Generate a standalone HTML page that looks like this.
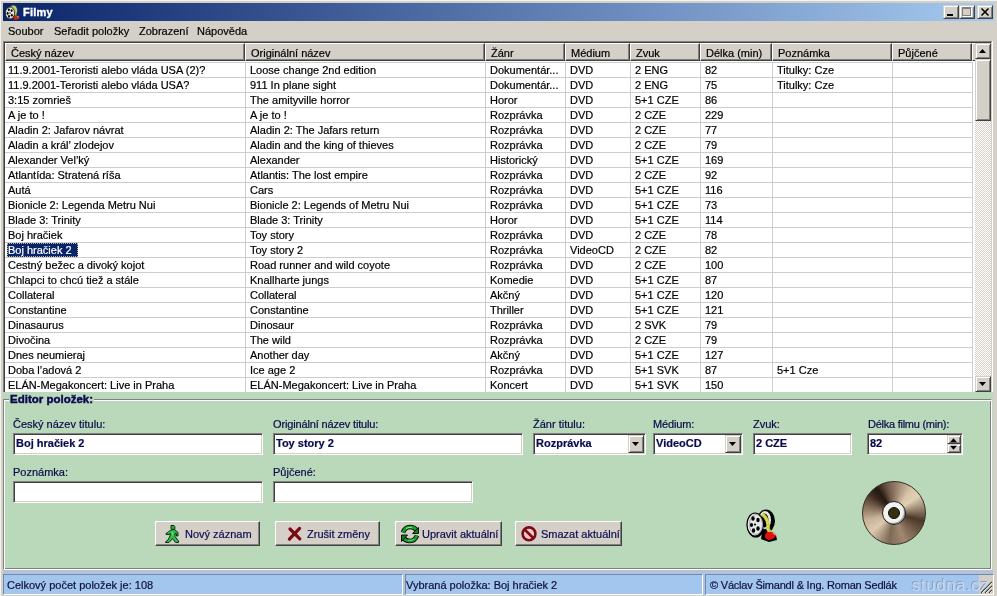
<!DOCTYPE html>
<html><head><meta charset="utf-8">
<style>
*{box-sizing:border-box}
html,body{margin:0;padding:0}
body{width:997px;height:596px;overflow:hidden;position:relative;background:#d4d0c8;font-family:"Liberation Sans",sans-serif;font-size:11px;color:#000}
.a{position:absolute}
.t{position:absolute;white-space:pre;line-height:13px;will-change:transform;-webkit-text-stroke:0.2px currentColor}
.hdr{position:absolute;top:43px;height:18px;background:#d4d0c8;border-top:1px solid #fff;border-left:1px solid #fff;border-right:1px solid #404040;border-bottom:1px solid #404040;box-shadow:inset -1px -1px 0 #808080}
.vg{position:absolute;top:62px;width:1px;height:330px;background:#cdcdcd}
.hg{position:absolute;left:5px;width:968px;height:1px;background:#cdcdcd}
.tb{position:absolute;height:22px;background:#fff;border-top:1px solid #808080;border-left:1px solid #808080;border-right:1px solid #fff;border-bottom:1px solid #fff;box-shadow:inset 1px 1px 0 #404040, inset -1px -1px 0 #d4d0c8}
.lbl{will-change:transform;position:absolute;white-space:pre;color:#080a48;line-height:13px;-webkit-text-stroke:0.2px currentColor}
.bt{position:absolute;top:521px;height:25px;background:#d4d0c8;border-top:1px solid #fff;border-left:1px solid #fff;border-right:1px solid #404040;border-bottom:1px solid #404040;box-shadow:inset -1px -1px 0 #808080}
.btx{will-change:transform;position:absolute;white-space:pre;color:#0c0c50;line-height:13px;top:6px;-webkit-text-stroke:0.2px currentColor}
.btn3d{position:absolute;background:#d4d0c8;border-top:1px solid #d4d0c8;border-left:1px solid #d4d0c8;border-right:1px solid #404040;border-bottom:1px solid #404040;box-shadow:inset 1px 1px 0 #fff, inset -1px -1px 0 #808080}
.bold{font-weight:bold;color:#0a0a50}
.sp{position:absolute;top:574px;height:21px;background:#a2c6ee;border-top:1px solid #6a8ab0;border-left:1px solid #6a8ab0;border-right:1px solid #fff;border-bottom:1px solid #fff}
</style></head><body>

<div class="a" style="left:0;top:0;width:997px;height:1px;background:#f4f4ee"></div>
<div class="a" style="left:0;top:0;width:1px;height:596px;background:#f4f4ee"></div>
<div class="a" style="left:3px;top:3px;width:991px;height:18px;background:linear-gradient(to right,#0a246a,#a6caf0)"></div>
<div class="t" style="left:23px;top:5px;color:#fff;font-weight:bold;font-size:11px;line-height:14px;letter-spacing:0.2px;-webkit-text-stroke:0.35px #fff">Filmy</div>
<svg class="a" style="left:2px;top:3px" width="18" height="18" viewBox="0 0 18 18"><ellipse cx="11.5" cy="7.5" rx="4" ry="5.5" fill="#c0c8b8" stroke="#203018" stroke-width="0.8"/><path d="M9.5 3.5 Q14 7 13 13" stroke="#a8c838" stroke-width="2.4" fill="none"/><path d="M12 12 Q16 12 17.5 14.5 Q16 17 13 17 Q11 16 12 12 Z" fill="#c82818"/><path d="M15 13 L17 14.5" stroke="#f0a080" stroke-width="1"/><ellipse cx="8" cy="10" rx="4.6" ry="6" fill="#e4e4e0" stroke="#202020" stroke-width="0.8"/><g fill="#000"><circle cx="8" cy="10" r="0.7"/><ellipse cx="6.8" cy="6.8" rx="1" ry="1.3"/><ellipse cx="9.6" cy="7.6" rx="1" ry="1.3"/><ellipse cx="5.6" cy="10.4" rx="1" ry="1.3"/><ellipse cx="7" cy="13.4" rx="1" ry="1.3"/><ellipse cx="9.8" cy="12.2" rx="1" ry="1.3"/></g></svg>
<div class="btn3d" style="left:943px;top:5px;width:16px;height:14px"></div>
<div class="btn3d" style="left:959px;top:5px;width:16px;height:14px"></div>
<div class="btn3d" style="left:977px;top:5px;width:16px;height:14px"></div>
<div class="a" style="left:947px;top:14px;width:6px;height:2px;background:#000"></div>
<div class="a" style="left:962px;top:7px;width:9px;height:9px;border:1px solid #808080;border-top-width:2px;box-shadow:1px 1px 0 #fff"></div>
<svg class="a" style="left:977px;top:5px" width="16" height="14" viewBox="0 0 16 14"><path d="M4.5 3.5 L11.5 10.5 M11.5 3.5 L4.5 10.5" stroke="#000" stroke-width="1.6"/></svg>
<div class="t" style="left:8px;top:25px">Soubor</div>
<div class="t" style="left:54px;top:25px">Seřadit položky</div>
<div class="t" style="left:139px;top:25px">Zobrazení</div>
<div class="t" style="left:197px;top:25px">Nápověda</div>
<div class="a" style="left:3px;top:41px;width:989px;height:1px;background:#808080"></div>
<div class="a" style="left:3px;top:41px;width:1px;height:351px;background:#808080"></div>
<div class="a" style="left:4px;top:42px;width:987px;height:1px;background:#404040"></div>
<div class="a" style="left:4px;top:42px;width:1px;height:350px;background:#404040"></div>
<div class="a" style="left:991px;top:42px;width:1px;height:350px;background:#d4d0c8"></div>
<div class="a" style="left:992px;top:41px;width:1px;height:351px;background:#fff"></div>
<div class="a" style="left:5px;top:43px;width:986px;height:349px;background:#fff"></div>
<div class="hdr" style="left:5px;width:240px"></div>
<div class="t" style="left:11px;top:47px">Český název</div>
<div class="hdr" style="left:245px;width:240px"></div>
<div class="t" style="left:251px;top:47px">Originální název</div>
<div class="hdr" style="left:485px;width:80px"></div>
<div class="t" style="left:491px;top:47px">Žánr</div>
<div class="hdr" style="left:565px;width:65px"></div>
<div class="t" style="left:571px;top:47px">Médium</div>
<div class="hdr" style="left:630px;width:70px"></div>
<div class="t" style="left:636px;top:47px">Zvuk</div>
<div class="hdr" style="left:700px;width:72px"></div>
<div class="t" style="left:706px;top:47px">Délka (min)</div>
<div class="hdr" style="left:772px;width:120px"></div>
<div class="t" style="left:778px;top:47px">Poznámka</div>
<div class="hdr" style="left:892px;width:80px"></div>
<div class="t" style="left:898px;top:47px">Půjčené</div>
<div class="hdr" style="left:972px;width:3px;border-right:0;box-shadow:none"></div>
<div class="hg" style="top:62px"></div>
<div class="hg" style="top:77px"></div>
<div class="hg" style="top:92px"></div>
<div class="hg" style="top:107px"></div>
<div class="hg" style="top:122px"></div>
<div class="hg" style="top:137px"></div>
<div class="hg" style="top:152px"></div>
<div class="hg" style="top:167px"></div>
<div class="hg" style="top:182px"></div>
<div class="hg" style="top:197px"></div>
<div class="hg" style="top:212px"></div>
<div class="hg" style="top:227px"></div>
<div class="hg" style="top:242px"></div>
<div class="hg" style="top:257px"></div>
<div class="hg" style="top:272px"></div>
<div class="hg" style="top:287px"></div>
<div class="hg" style="top:302px"></div>
<div class="hg" style="top:317px"></div>
<div class="hg" style="top:332px"></div>
<div class="hg" style="top:347px"></div>
<div class="hg" style="top:362px"></div>
<div class="hg" style="top:377px"></div>
<div class="vg" style="left:245px"></div>
<div class="vg" style="left:485px"></div>
<div class="vg" style="left:565px"></div>
<div class="vg" style="left:630px"></div>
<div class="vg" style="left:700px"></div>
<div class="vg" style="left:772px"></div>
<div class="vg" style="left:892px"></div>
<div class="vg" style="left:972px"></div>
<div class="t" style="left:8px;top:64px">11.9.2001-Teroristi alebo vláda USA (2)?</div>
<div class="t" style="left:250px;top:64px">Loose change 2nd edition</div>
<div class="t" style="left:490px;top:64px">Dokumentár...</div>
<div class="t" style="left:570px;top:64px">DVD</div>
<div class="t" style="left:635px;top:64px">2 ENG</div>
<div class="t" style="left:705px;top:64px">82</div>
<div class="t" style="left:777px;top:64px">Titulky: Cze</div>
<div class="t" style="left:8px;top:79px">11.9.2001-Teroristi alebo vláda USA?</div>
<div class="t" style="left:250px;top:79px">911 In plane sight</div>
<div class="t" style="left:490px;top:79px">Dokumentár...</div>
<div class="t" style="left:570px;top:79px">DVD</div>
<div class="t" style="left:635px;top:79px">2 ENG</div>
<div class="t" style="left:705px;top:79px">75</div>
<div class="t" style="left:777px;top:79px">Titulky: Cze</div>
<div class="t" style="left:8px;top:94px">3:15 zomrieš</div>
<div class="t" style="left:250px;top:94px">The amityville horror</div>
<div class="t" style="left:490px;top:94px">Horor</div>
<div class="t" style="left:570px;top:94px">DVD</div>
<div class="t" style="left:635px;top:94px">5+1 CZE</div>
<div class="t" style="left:705px;top:94px">86</div>
<div class="t" style="left:8px;top:109px">A je to !</div>
<div class="t" style="left:250px;top:109px">A je to !</div>
<div class="t" style="left:490px;top:109px">Rozprávka</div>
<div class="t" style="left:570px;top:109px">DVD</div>
<div class="t" style="left:635px;top:109px">2 CZE</div>
<div class="t" style="left:705px;top:109px">229</div>
<div class="t" style="left:8px;top:124px">Aladin 2: Jafarov návrat</div>
<div class="t" style="left:250px;top:124px">Aladin 2: The Jafars return</div>
<div class="t" style="left:490px;top:124px">Rozprávka</div>
<div class="t" style="left:570px;top:124px">DVD</div>
<div class="t" style="left:635px;top:124px">2 CZE</div>
<div class="t" style="left:705px;top:124px">77</div>
<div class="t" style="left:8px;top:139px">Aladin a král’ zlodejov</div>
<div class="t" style="left:250px;top:139px">Aladin and the king of thieves</div>
<div class="t" style="left:490px;top:139px">Rozprávka</div>
<div class="t" style="left:570px;top:139px">DVD</div>
<div class="t" style="left:635px;top:139px">2 CZE</div>
<div class="t" style="left:705px;top:139px">79</div>
<div class="t" style="left:8px;top:154px">Alexander Vel’ký</div>
<div class="t" style="left:250px;top:154px">Alexander</div>
<div class="t" style="left:490px;top:154px">Historický</div>
<div class="t" style="left:570px;top:154px">DVD</div>
<div class="t" style="left:635px;top:154px">5+1 CZE</div>
<div class="t" style="left:705px;top:154px">169</div>
<div class="t" style="left:8px;top:169px">Atlantída: Stratená ríša</div>
<div class="t" style="left:250px;top:169px">Atlantis: The lost empire</div>
<div class="t" style="left:490px;top:169px">Rozprávka</div>
<div class="t" style="left:570px;top:169px">DVD</div>
<div class="t" style="left:635px;top:169px">2 CZE</div>
<div class="t" style="left:705px;top:169px">92</div>
<div class="t" style="left:8px;top:184px">Autá</div>
<div class="t" style="left:250px;top:184px">Cars</div>
<div class="t" style="left:490px;top:184px">Rozprávka</div>
<div class="t" style="left:570px;top:184px">DVD</div>
<div class="t" style="left:635px;top:184px">5+1 CZE</div>
<div class="t" style="left:705px;top:184px">116</div>
<div class="t" style="left:8px;top:199px">Bionicle 2: Legenda Metru Nui</div>
<div class="t" style="left:250px;top:199px">Bionicle 2: Legends of Metru Nui</div>
<div class="t" style="left:490px;top:199px">Rozprávka</div>
<div class="t" style="left:570px;top:199px">DVD</div>
<div class="t" style="left:635px;top:199px">5+1 CZE</div>
<div class="t" style="left:705px;top:199px">73</div>
<div class="t" style="left:8px;top:214px">Blade 3: Trinity</div>
<div class="t" style="left:250px;top:214px">Blade 3: Trinity</div>
<div class="t" style="left:490px;top:214px">Horor</div>
<div class="t" style="left:570px;top:214px">DVD</div>
<div class="t" style="left:635px;top:214px">5+1 CZE</div>
<div class="t" style="left:705px;top:214px">114</div>
<div class="t" style="left:8px;top:229px">Boj hračiek</div>
<div class="t" style="left:250px;top:229px">Toy story</div>
<div class="t" style="left:490px;top:229px">Rozprávka</div>
<div class="t" style="left:570px;top:229px">DVD</div>
<div class="t" style="left:635px;top:229px">2 CZE</div>
<div class="t" style="left:705px;top:229px">78</div>
<div class="a" style="left:7px;top:243px;width:71px;height:14px;background:#0a246a;outline:1px dotted #b8b490;outline-offset:-1px"></div>
<div class="t" style="left:8px;top:244px;color:#fff">Boj hračiek 2</div>
<div class="t" style="left:250px;top:244px">Toy story 2</div>
<div class="t" style="left:490px;top:244px">Rozprávka</div>
<div class="t" style="left:570px;top:244px">VideoCD</div>
<div class="t" style="left:635px;top:244px">2 CZE</div>
<div class="t" style="left:705px;top:244px">82</div>
<div class="t" style="left:8px;top:259px">Cestný bežec a divoký kojot</div>
<div class="t" style="left:250px;top:259px">Road runner and wild coyote</div>
<div class="t" style="left:490px;top:259px">Rozprávka</div>
<div class="t" style="left:570px;top:259px">DVD</div>
<div class="t" style="left:635px;top:259px">2 CZE</div>
<div class="t" style="left:705px;top:259px">100</div>
<div class="t" style="left:8px;top:274px">Chlapci to chcú tiež a stále</div>
<div class="t" style="left:250px;top:274px">Knallharte jungs</div>
<div class="t" style="left:490px;top:274px">Komedie</div>
<div class="t" style="left:570px;top:274px">DVD</div>
<div class="t" style="left:635px;top:274px">5+1 CZE</div>
<div class="t" style="left:705px;top:274px">87</div>
<div class="t" style="left:8px;top:289px">Collateral</div>
<div class="t" style="left:250px;top:289px">Collateral</div>
<div class="t" style="left:490px;top:289px">Akčný</div>
<div class="t" style="left:570px;top:289px">DVD</div>
<div class="t" style="left:635px;top:289px">5+1 CZE</div>
<div class="t" style="left:705px;top:289px">120</div>
<div class="t" style="left:8px;top:304px">Constantine</div>
<div class="t" style="left:250px;top:304px">Constantine</div>
<div class="t" style="left:490px;top:304px">Thriller</div>
<div class="t" style="left:570px;top:304px">DVD</div>
<div class="t" style="left:635px;top:304px">5+1 CZE</div>
<div class="t" style="left:705px;top:304px">121</div>
<div class="t" style="left:8px;top:319px">Dinasaurus</div>
<div class="t" style="left:250px;top:319px">Dinosaur</div>
<div class="t" style="left:490px;top:319px">Rozprávka</div>
<div class="t" style="left:570px;top:319px">DVD</div>
<div class="t" style="left:635px;top:319px">2 SVK</div>
<div class="t" style="left:705px;top:319px">79</div>
<div class="t" style="left:8px;top:334px">Divočina</div>
<div class="t" style="left:250px;top:334px">The wild</div>
<div class="t" style="left:490px;top:334px">Rozprávka</div>
<div class="t" style="left:570px;top:334px">DVD</div>
<div class="t" style="left:635px;top:334px">2 CZE</div>
<div class="t" style="left:705px;top:334px">79</div>
<div class="t" style="left:8px;top:349px">Dnes neumieraj</div>
<div class="t" style="left:250px;top:349px">Another day</div>
<div class="t" style="left:490px;top:349px">Akčný</div>
<div class="t" style="left:570px;top:349px">DVD</div>
<div class="t" style="left:635px;top:349px">5+1 CZE</div>
<div class="t" style="left:705px;top:349px">127</div>
<div class="t" style="left:8px;top:364px">Doba l’adová 2</div>
<div class="t" style="left:250px;top:364px">Ice age 2</div>
<div class="t" style="left:490px;top:364px">Rozprávka</div>
<div class="t" style="left:570px;top:364px">DVD</div>
<div class="t" style="left:635px;top:364px">5+1 SVK</div>
<div class="t" style="left:705px;top:364px">87</div>
<div class="t" style="left:777px;top:364px">5+1 Cze</div>
<div class="t" style="left:8px;top:379px">ELÁN-Megakoncert: Live in Praha</div>
<div class="t" style="left:250px;top:379px">ELÁN-Megakoncert: Live in Praha</div>
<div class="t" style="left:490px;top:379px">Koncert</div>
<div class="t" style="left:570px;top:379px">DVD</div>
<div class="t" style="left:635px;top:379px">5+1 SVK</div>
<div class="t" style="left:705px;top:379px">150</div>
<div class="a" style="left:975px;top:43px;width:16px;height:349px;background-color:#fff;background-image:linear-gradient(45deg,#d4d0c8 25%,transparent 25%,transparent 75%,#d4d0c8 75%),linear-gradient(45deg,#d4d0c8 25%,transparent 25%,transparent 75%,#d4d0c8 75%);background-size:2px 2px;background-position:0 0,1px 1px"></div>
<div class="btn3d" style="left:975px;top:43px;width:16px;height:16px"></div>
<svg class="a" style="left:975px;top:43px" width="16" height="16"><path d="M4 10h7l-3.5-4z" fill="#000"/></svg>
<div class="btn3d" style="left:975px;top:59px;width:16px;height:62px"></div>
<div class="btn3d" style="left:975px;top:376px;width:16px;height:16px"></div>
<svg class="a" style="left:975px;top:376px" width="16" height="16"><path d="M4 6h7l-3.5 4z" fill="#000"/></svg>
<div class="a" style="left:3px;top:392px;width:990px;height:179px;background:#bad8ba"></div>
<div class="a" style="left:3px;top:399px;width:989px;height:171px;border-top:1px solid #808080;border-left:1px solid #808080;border-right:1px solid #fff;border-bottom:1px solid #fff;box-shadow:inset 1px 1px 0 #fff, inset -1px -1px 0 #808080"></div>
<div class="t bold" style="left:9px;top:393px;background:#bad8ba;padding:0 1px;font-size:11.5px;-webkit-text-stroke:0.45px currentColor">Editor položek:</div>
<div class="lbl" style="left:13px;top:418px;letter-spacing:0px">Český název titulu:</div>
<div class="lbl" style="left:273px;top:418px;letter-spacing:-0.15px">Originální název titulu:</div>
<div class="lbl" style="left:533px;top:418px;letter-spacing:0px">Žánr titulu:</div>
<div class="lbl" style="left:653px;top:418px;letter-spacing:-0.15px">Médium:</div>
<div class="lbl" style="left:753px;top:418px;letter-spacing:0px">Zvuk:</div>
<div class="lbl" style="left:868px;top:418px;letter-spacing:-0.25px">Délka filmu (min):</div>
<div class="lbl" style="left:13px;top:466px">Poznámka:</div>
<div class="lbl" style="left:273px;top:466px">Půjčené:</div>
<div class="tb" style="left:13px;top:433px;width:250px"></div>
<div class="t bold" style="left:16px;top:437px">Boj hračiek 2</div>
<div class="tb" style="left:273px;top:433px;width:250px"></div>
<div class="t bold" style="left:276px;top:437px">Toy story 2</div>
<div class="tb" style="left:533px;top:433px;width:113px"></div>
<div class="t bold" style="left:536px;top:437px">Rozprávka</div>
<div class="tb" style="left:653px;top:433px;width:90px"></div>
<div class="t bold" style="left:656px;top:437px">VideoCD</div>
<div class="tb" style="left:753px;top:433px;width:99px"></div>
<div class="t bold" style="left:756px;top:437px">2 CZE</div>
<div class="tb" style="left:867px;top:433px;width:96px"></div>
<div class="t bold" style="left:870px;top:437px">82</div>
<div class="tb" style="left:13px;top:481px;width:250px"></div>
<div class="tb" style="left:273px;top:481px;width:200px"></div>
<div class="btn3d" style="left:628px;top:435px;width:16px;height:18px"></div>
<svg class="a" style="left:628px;top:435px" width="16" height="18"><path d="M4 7h7l-3.5 4z" fill="#000"/></svg>
<div class="btn3d" style="left:725px;top:435px;width:16px;height:18px"></div>
<svg class="a" style="left:725px;top:435px" width="16" height="18"><path d="M4 7h7l-3.5 4z" fill="#000"/></svg>
<div class="btn3d" style="left:947px;top:435px;width:14px;height:9px"></div>
<div class="btn3d" style="left:947px;top:444px;width:14px;height:9px"></div>
<svg class="a" style="left:947px;top:435px" width="14" height="18"><path d="M3 7.2 L10 7.2 L6.5 3.2 Z M3 10.8 L10 10.8 L6.5 14.8 Z" fill="#000"/></svg>
<div class="bt" style="left:155px;width:105px"><div class="btx" style="left:29px">Nový záznam</div></div>
<div class="bt" style="left:275px;width:105px"><div class="btx" style="left:31px">Zrušit změny</div></div>
<div class="bt" style="left:395px;width:107px"><div class="btx" style="left:26px">Upravit aktuální</div></div>
<div class="bt" style="left:515px;width:107px"><div class="btx" style="left:25px">Smazat aktuální</div></div>
<svg class="a" style="left:160px;top:522px" width="24" height="24" viewBox="0 0 24 24"><path d="M11 3.5 L14 3.5 L14.8 4.5 L14.8 7.2 L12 7.5 L11 6.8 Z" fill="#28b040" stroke="#0a2a10" stroke-width="1"/><path d="M10.5 8 L14.5 7.5 L18 10.5 L18 14 L16.5 14 L16.3 11.5 L15.2 11.2 L15 14.5 L18.5 19 L18.5 20.5 L15.5 20.5 L12.5 16.5 L10 19.5 L9 20.5 L5.5 20.5 L5.5 19.8 L8 18 L10 14 L10.5 11.5 L9 12.5 L6 12.5 L6 11.5 L8.5 10 Z" fill="#30c048" stroke="#0a2a10" stroke-width="1" stroke-linejoin="round"/><path d="M12 9.5 L13 13.5" stroke="#70e080" stroke-width="1"/></svg><svg class="a" style="left:284px;top:522px" width="24" height="24" viewBox="0 0 24 24"><path d="M6 7 L15.8 16.8 M15.6 6.4 L5.4 17.2" stroke="#7c0a14" stroke-width="3.2" stroke-linecap="round"/></svg><svg class="a" style="left:398px;top:522px" width="24" height="24" viewBox="0 0 24 24"><path d="M5 10.5 Q7 5 12 5 Q17 5 18.5 8.5" stroke="#000" stroke-width="4.6" fill="none"/><path d="M5 10.5 Q7 5 12 5 Q17 5 18.5 8.5" stroke="#18a028" stroke-width="2.8" fill="none"/><path d="M14.5 11.5 L20.5 11.5 L20.5 5.5 Z" fill="#108018" stroke="#000" stroke-width="0.9"/><path d="M19 13.5 Q17 19 12 19 Q7 19 5.5 15.5" stroke="#000" stroke-width="4.6" fill="none"/><path d="M19 13.5 Q17 19 12 19 Q7 19 5.5 15.5" stroke="#18a028" stroke-width="2.8" fill="none"/><path d="M9.5 13 L3.5 13 L3.5 19.5 Z" fill="#108018" stroke="#000" stroke-width="0.9"/><path d="M8 6.5 Q11 4.8 14 5.5" stroke="#80f090" stroke-width="1" fill="none"/><path d="M10 18.2 Q13 19 16 17" stroke="#60e070" stroke-width="1" fill="none"/></svg><svg class="a" style="left:517px;top:522px" width="24" height="24" viewBox="0 0 24 24"><circle cx="12" cy="11.8" r="6.4" fill="#f4c8c8" stroke="#7c0a14" stroke-width="2.6"/><path d="M7.8 7.6 L16.2 16" stroke="#7c0a14" stroke-width="2.6"/></svg>
<svg class="a" style="left:743px;top:505px" width="40" height="40" viewBox="0 0 40 40"><g fill="#000"><ellipse cx="23" cy="16" rx="9" ry="11.5"/><ellipse cx="12.8" cy="20.3" rx="9" ry="12.3"/><path d="M20 22 L33 30 L34 35 L26 37 L18 34 Z"/></g><ellipse cx="22" cy="15" rx="6.5" ry="9.5" fill="#e8e8e8" stroke="#000" stroke-width="1"/><ellipse cx="21.5" cy="15.5" rx="4" ry="7" fill="#000"/><path d="M19 9 Q26 14 25 24 L28 29" stroke="#c8d040" stroke-width="3.5" fill="none"/><path d="M19.5 10 Q25.5 14.5 24.5 24 L27 28" stroke="#f4f480" stroke-width="1" stroke-dasharray="1.5 1.5" fill="none"/><path d="M24 27 Q30 26 33 30 Q32 34 26 35 Q21 34 22 30 Z" fill="#e01010"/><path d="M30 28 L33 30" stroke="#f0a060" stroke-width="1.5"/><ellipse cx="12" cy="19.5" rx="8" ry="11.5" fill="#e6e6e6" stroke="#000" stroke-width="1.2"/><ellipse cx="13" cy="19.5" rx="6.5" ry="10" fill="none" stroke="#a8a8a8" stroke-width="1"/><g fill="#000"><circle cx="12" cy="19.5" r="1.1"/><ellipse cx="10" cy="13.5" rx="1.7" ry="2.2"/><ellipse cx="15" cy="15" rx="1.7" ry="2.2"/><ellipse cx="8.5" cy="20" rx="1.6" ry="2.1"/><ellipse cx="10.5" cy="25.5" rx="1.7" ry="2.2"/><ellipse cx="15" cy="23.5" rx="1.7" ry="2.2"/></g></svg><div class="a" style="left:862px;top:481px;width:64px;height:64px;border-radius:50%;background:conic-gradient(from 0deg,#8c7462 0deg,#d8c4a8 35deg,#e0d0b4 55deg,#8a7664 85deg,#4a3828 105deg,#7a6450 135deg,#a08870 160deg,#7e6a56 190deg,#dccab0 230deg,#c8b498 255deg,#8e7660 280deg,#3a2a1e 310deg,#241810 325deg,#6a5644 345deg,#8c7462 360deg);border:1px solid #3a3020"></div><div class="a" style="left:882px;top:501px;width:24px;height:24px;border-radius:50%;background:#f2f2f0;border:1.5px solid #181818;box-shadow:inset -1px -1px 1px #909090"></div><div class="a" style="left:888px;top:507px;width:12px;height:12px;border-radius:50%;background:#38300c;border:1px solid #101010"></div>
<div class="a" style="left:3px;top:570px;width:990px;height:25px;background:#b4c2d8"></div>
<div class="sp" style="left:3px;width:400px"></div>
<div class="sp" style="left:405px;width:298px"></div>
<div class="sp" style="left:705px;width:289px"></div>
<div class="a" style="left:979px;top:575px;width:14px;height:19px;background:#d4d0c8"></div>
<div class="t" style="left:7px;top:579px;color:#10103a">Celkový počet položek je: 108</div>
<div class="t" style="left:406px;top:579px;color:#10103a">Vybraná položka: Boj hračiek 2</div>
<div class="t" style="left:710px;top:579px;letter-spacing:-0.2px;color:#10103a">© Václav Šimandl &amp; Ing. Roman Sedlák</div>
<div class="t" style="left:912px;top:577px;font-size:17px;line-height:18px;letter-spacing:0.5px;color:#c4d8f0;text-shadow:-1px -1px 0 #8aa0bc;-webkit-text-stroke:0">studna.cz</div>
<svg class="a" style="left:979px;top:580px" width="14" height="14"><path d="M13 2 L2 13 M13 6 L6 13 M13 10 L10 13" stroke="#404040" stroke-width="1.3"/><path d="M13 3 L3 13 M13 7 L7 13 M13 11 L11 13" stroke="#fff" stroke-width="0.8"/></svg>
</body></html>
